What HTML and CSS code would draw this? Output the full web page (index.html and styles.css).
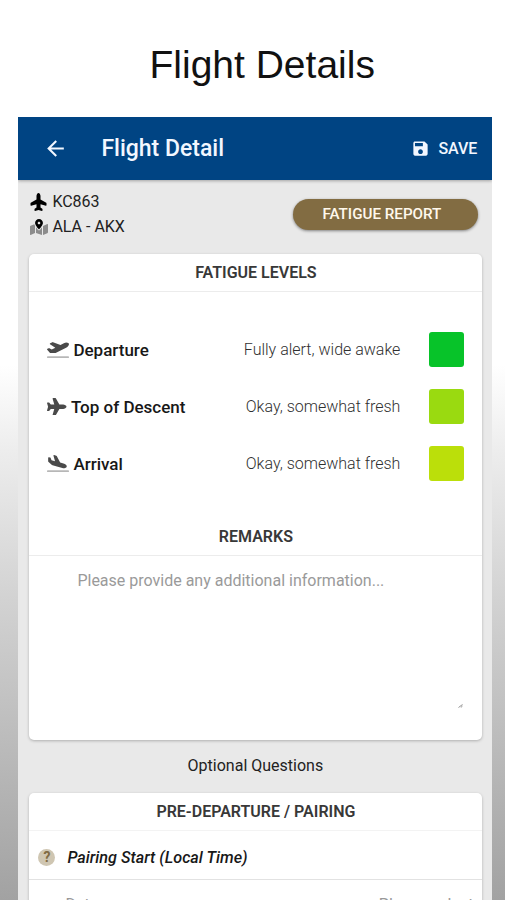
FILE: index.html
```html
<!DOCTYPE html>
<html lang="en">
<head>
<meta charset="utf-8">
<title>Flight Details</title>
<link rel="stylesheet" href="styles.css">
</head>
<body>
<div class="page">
  <h1 class="page-title">Flight Details</h1>
  <div class="app">
    <header class="bar">
      <svg class="back" viewBox="0 0 24 24"><path d="M20 11H7.83l5.59-5.59L12 4l-8 8 8 8 1.41-1.41L7.83 13H20v-2z"/></svg>
      <h2 class="bar-title">Flight Detail</h2>
      <svg class="save-icon" viewBox="0 0 24 24"><path d="M17 3H5c-1.11 0-2 .9-2 2v14c0 1.1.89 2 2 2h14c1.1 0 2-.9 2-2V7l-4-4zm-5 16c-1.66 0-3-1.34-3-3s1.34-3 3-3 3 1.34 3 3-1.34 3-3 3zm3-10H5V5h10v4z"/></svg>
      <span class="save">SAVE</span>
    </header>
    <section class="flight">
      <div class="flight-info">
        <div class="info"><svg class="info-plane" viewBox="0 0 512 576"><path transform="matrix(0 -1 1 0 0 576)" d="M480 192H365.71L260.61 8.06A16.014 16.014 0 0 0 246.71 0h-65.5c-10.63 0-18.3 10.17-15.38 20.39L214.86 192H112l-43.2-57.6c-3.02-4.03-7.77-6.4-12.8-6.4H16.01C5.6 128-2.04 137.78.49 147.88L32 256 .49 364.12C-2.04 374.22 5.6 384 16.01 384H56c5.04 0 9.78-2.37 12.8-6.4L112 320h102.86l-49.03 171.6c-2.92 10.22 4.75 20.4 15.38 20.4h65.5c5.74 0 11.04-3.08 13.89-8.06L365.71 320H480c35.35 0 96-28.65 96-64s-60.65-64-96-64z"/></svg><span>KC863</span></div>
        <div class="info"><svg class="info-map" viewBox="0 0 576 512"><path class="soft" d="M20.12 215.95A32.006 32.006 0 0 0 0 245.66v250.32c0 11.32 11.43 19.06 21.94 14.86L160 448V214.92c-8.84-15.98-16.07-31.54-21.25-46.42L20.12 215.95zM288 359.67c-14.07 0-27.38-6.18-36.51-16.96-19.66-23.2-40.57-49.62-59.49-76.72v182l192 64V266c-18.92 27.09-39.82 53.52-59.49 76.72-9.13 10.77-22.44 16.95-36.51 16.95zm266.06-198.51L416 224v288l139.88-55.95A31.996 31.996 0 0 0 576 426.34V176.02c0-11.32-11.43-19.06-21.94-14.86z"/><path d="M288 0c-69.59 0-126 56.41-126 126 0 56.26 82.35 158.8 113.9 196.02 6.39 7.54 17.82 7.54 24.2 0C331.65 284.8 414 182.26 414 126 414 56.41 357.59 0 288 0zm0 168c-23.2 0-42-18.8-42-42s18.8-42 42-42 42 18.8 42 42-18.8 42-42 42z"/></svg><span>ALA - AKX</span></div>
      </div>
      <button class="report">FATIGUE REPORT</button>
    </section>
    <section class="card levels">
      <h3 class="card-head">FATIGUE LEVELS</h3>
      <div class="rows">
        <div class="row">
          <svg class="icon" viewBox="0 0 640 512"><path class="soft" d="M624 448H16c-8.84 0-16 7.16-16 16v32c0 8.84 7.16 16 16 16h608c8.84 0 16-7.16 16-16v-32c0-8.84-7.16-16-16-16z"/><path d="M80.55 341.27c6.28 6.84 15.1 10.72 24.33 10.71l130.54-.18a65.62 65.62 0 0 0 29.64-7.12l290.96-147.65c26.74-13.57 50.71-32.94 67.02-58.31 18.31-28.48 20.3-49.09 13.07-63.65-7.21-14.57-24.74-25.27-58.25-27.45-29.85-1.94-59.54 5.92-86.28 19.48l-98.51 49.99-218.7-82.06a17.799 17.799 0 0 0-18-1.11L90.62 67.29c-10.67 5.41-13.25 19.65-5.17 28.53l156.22 98.1-103.21 52.38-72.35-36.47a17.804 17.804 0 0 0-16.07.02L9.91 230.22c-10.44 5.3-13.19 19.12-5.57 28.08l76.21 82.97z"/></svg>
          <span class="label">Departure</span><span class="value">Fully alert, wide awake</span><span class="swatch alert"></span>
        </div>
        <div class="row">
          <svg class="icon narrow" viewBox="0 0 576 512"><path d="M480 192H365.71L260.61 8.06A16.014 16.014 0 0 0 246.71 0h-65.5c-10.63 0-18.3 10.17-15.38 20.39L214.86 192H112l-43.2-57.6c-3.02-4.03-7.77-6.4-12.8-6.4H16.01C5.6 128-2.04 137.78.49 147.88L32 256 .49 364.12C-2.04 374.22 5.6 384 16.01 384H56c5.04 0 9.78-2.37 12.8-6.4L112 320h102.86l-49.03 171.6c-2.92 10.22 4.75 20.4 15.38 20.4h65.5c5.74 0 11.04-3.08 13.89-8.06L365.71 320H480c35.35 0 96-28.65 96-64s-60.65-64-96-64z"/></svg>
          <span class="label">Top of Descent</span><span class="value">Okay, somewhat fresh</span><span class="swatch okay"></span>
        </div>
        <div class="row">
          <svg class="icon" viewBox="0 0 640 512"><path class="soft" d="M624 448H16c-8.84 0-16 7.16-16 16v32c0 8.84 7.16 16 16 16h608c8.84 0 16-7.16 16-16v-32c0-8.84-7.16-16-16-16z"/><path d="M44.81 205.66l88.74 80a62.607 62.607 0 0 0 25.47 13.93l287.6 78.35c26.48 7.21 54.56 8.72 81 1.36 29.67-8.27 43.44-21.21 47.25-35.71 3.83-14.5-1.73-32.71-23.37-54.96-19.28-19.82-44.35-32.79-70.83-40l-97.51-26.56L282.8 30.22c-1.51-5.81-5.95-10.35-11.66-11.91L206.05.58c-10.56-2.88-20.9 5.32-20.71 16.44l47.92 164.21-102.2-27.84-27.59-67.88c-1.93-4.89-6.01-8.57-11.02-9.93L52.72 64.75c-10.34-2.82-20.53 5-20.72 15.88l.23 101.78c.19 8.91 6.03 17.34 12.58 23.25z"/></svg>
          <span class="label">Arrival</span><span class="value">Okay, somewhat fresh</span><span class="swatch fresh"></span>
        </div>
      </div>
      <h3 class="card-head">REMARKS</h3>
      <div class="remarks">
        <p class="placeholder">Please provide any additional information...</p>
        <svg class="grip" viewBox="0 0 5 4"><path d="M0.5 3.5L4.5 0.5M2.8 3.5L4.5 2"/></svg>
      </div>
    </section>
    <p class="optional">Optional Questions</p>
    <section class="card pairing">
      <h3 class="card-head">PRE-DEPARTURE / PAIRING</h3>
      <div class="question"><span class="help">?</span><span>Pairing Start (Local Time)</span></div>
      <div class="field"><span>Date</span><span>Please select</span></div>
    </section>
  </div>
</div>
</body>
</html>
```
FILE: styles.css
```css
* { box-sizing: border-box; }
html { background: #fff; }
body {
  margin: 0;
  height: 900px;
  overflow: hidden;
  font-family: Roboto, "Liberation Sans", sans-serif;
  color: #222;
}
h1, h2, h3, p { margin: 0; }
svg { display: block; flex: none; fill: currentColor; }

.page {
  width: 505px;
  height: 900px;
  overflow: hidden;
  background: linear-gradient(#fff 365px, #ededed 450px, #d2d2d2 600px, #a2a2a2 900px);
}
.page-title {
  height: 117px;
  padding: 42px 0 0 149.5px;
  font: 400 39px/46px "Liberation Sans", Arial, sans-serif;
  color: #111;
  white-space: nowrap;
}
.app {
  width: 474px;
  height: 783px;
  margin-left: 18.4px;
  overflow: hidden;
  background: #e9e9e9;
}
.bar {
  display: flex;
  align-items: center;
  height: 63px;
  padding: 0 15px 0 25px;
  background: #004483;
  color: #f2f7ff;
  box-shadow: 0 1px 3px rgba(0, 0, 0, .3);
}
.back { width: 25px; height: 25px; }
.bar-title { margin-left: 33px; font-size: 23px; font-weight: 500; line-height: 30px; }
.save-icon { width: 19px; height: 19px; margin: 0 8px 0 auto; }
.save { font-size: 16px; font-weight: 500; line-height: 20px; }

.flight {
  display: flex;
  justify-content: space-between;
  height: 74px;
  padding: 9px 14px 0 12px;
}
.info { display: flex; align-items: center; height: 25px; font-size: 16px; }
.info-plane { width: 17px; height: 18px; margin: 0 5px 0 0; color: #000; }
.info-map { width: 18px; height: 16px; margin: 0 4px 0 0; color: #000; }
.soft { opacity: .4; }
.report {
  width: 185px;
  height: 31px;
  margin-top: 10px;
  padding: 0 8px 0 0;
  border: 0;
  border-radius: 16px;
  background: #826c42;
  box-shadow: 0 1px 3px rgba(0, 0, 0, .45);
  color: #fff8ec;
  font: 500 15.2px/31px Roboto, sans-serif;
}

.card {
  width: 453px;
  margin-left: 11px;
  border-radius: 5px;
  background: #fff;
  box-shadow: 0 1px 3px rgba(0, 0, 0, .25);
}
.card-head {
  height: 38px;
  border-bottom: 1px solid #ececec;
  font-size: 16px;
  font-weight: 600;
  line-height: 37px;
  text-align: center;
  color: #383838;
}
.levels { height: 486px; }
.rows { height: 226px; padding: 29px 18px 0; }
.row { display: flex; align-items: center; height: 57px; }
.icon { width: 22px; height: 17.5px; margin-right: 4px; color: #4a4a4a; }
.narrow { width: 19.5px; }
.label { font-size: 17px; font-weight: 500; color: #181818; }
.value { margin-left: auto; font-size: 16px; font-weight: 300; color: #303030; }
.swatch { width: 35px; height: 35px; margin-left: 29px; border-radius: 3px; }
.alert { background: #07c329; }
.okay { background: #9ada10; }
.fresh { background: #bbdf0a; }
.remarks {
  display: flex;
  flex-direction: column;
  justify-content: space-between;
  height: 152px;
  padding: 15px 19px 0 48px;
}
.placeholder { font-size: 16px; line-height: 20px; color: #9a9a9a; }
.grip { width: 5px; height: 4px; align-self: flex-end; fill: none; stroke: #777; stroke-width: .8; }

.optional { height: 53px; font-size: 16px; line-height: 51px; text-align: center; }
.pairing { height: 140px; }
.pairing .card-head { border-color: #f3f3f3; }
.question {
  display: flex;
  align-items: center;
  height: 49px;
  padding: 5px 0 0 9px;
  border-bottom: 1px solid #e2e2e2;
  font-size: 16.2px;
  font-style: italic;
  font-weight: 500;
  color: #181818;
}
.help {
  width: 17px;
  height: 17px;
  margin-right: 12px;
  border-radius: 50%;
  background: #cfc6b2;
  color: #806b43;
  font: 700 14px/17px Roboto, sans-serif;
  text-align: center;
}
.field {
  display: flex;
  justify-content: space-between;
  padding: 15px 9px 0 36px;
  font-size: 16px;
  line-height: 20px;
  color: #999;
}
```
